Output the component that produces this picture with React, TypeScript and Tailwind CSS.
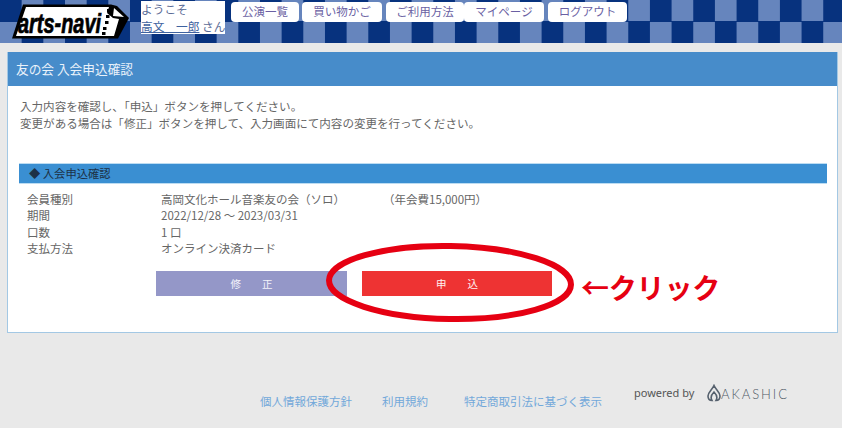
const font = { fontFamily: '"Noto Sans CJK JP", "Noto Sans", sans-serif' };

function Logo() {
  return (
    <svg width="120" height="38" viewBox="0 0 120 38" className="shrink-0 ml-[11px] mt-[3px]">
      <path d="M12 1.5 L100 1.5 L106 3 L118 15 L107 35.5 L1 35.5 Z" fill="#000" />
      <path d="M15 4 L98 4 L96 10 L102 15 L108 16 L103 33 L5 33 Z" fill="#fff" />
      <text
        x="7"
        y="29.5"
        textLength="83"
        lengthAdjust="spacingAndGlyphs"
        fontFamily="Liberation Sans"
        fontWeight="700"
        fontStyle="italic"
        fontSize="27"
        stroke="#000"
        strokeWidth="0.7"
        fill="#000"
      >
        arts-navi
      </text>
      <rect x="96" y="6" width="3.5" height="3" fill="#000" />
      <rect x="95" y="12" width="3.5" height="3" fill="#000" />
      <rect x="94" y="18" width="3.5" height="3" fill="#000" />
      <rect x="92" y="24" width="3.5" height="3" fill="#000" />
      <rect x="91" y="29" width="3.5" height="3" fill="#000" />
      <path d="M103 5 L113 14 L102 13 Z" fill="#fff" />
    </svg>
  );
}

function Akashic() {
  return (
    <svg width="84" height="18" viewBox="0 0 84 18" className="ml-[12px]">
      <path
        d="M8 1.5 C6 6 2 8 2 12 C2 15 4 16.5 6 16.5 C4.5 14 5 11 8 8 C11 11 11.5 14 10 16.5 C12.5 16.5 14 15 14 12 C14 8 10 6 8 1.5 Z"
        fill="none"
        stroke="#56616e"
        strokeWidth="1.6"
      />
      <text
        x="15"
        y="14.5"
        textLength="66"
        lengthAdjust="spacing"
        fontFamily="Lato"
        fontWeight="300"
        fontSize="13"
        fill="#4f5a66"
      >
        AKASHIC
      </text>
    </svg>
  );
}

const navItems = [
  { label: "公演一覧", w: "w-[68px]", mr: "mr-[3px]" },
  { label: "買い物かご", w: "w-[80px]", mr: "mr-[4px]" },
  { label: "ご利用方法", w: "w-[78px]", mr: "mr-0" },
  { label: "マイページ", w: "w-[80px]", mr: "mr-[4px]" },
  { label: "ログアウト", w: "w-[79px]", mr: "mr-0" },
];

const rows = [
  { k: "会員種別", v: "高岡文化ホール音楽友の会（ソロ）", x: "（年会費15,000円）" },
  { k: "期間", v: "2022/12/28 ～ 2023/03/31" },
  { k: "口数", v: "1 口" },
  { k: "支払方法", v: "オンライン決済カード" },
];

export default function App() {
  return (
    <div className="relative w-[842px] h-[428px] overflow-hidden bg-[#e9e9e9]" style={font}>
      <header className="flex h-[43px] bg-[conic-gradient(#6685bd_25%,#07327e_0_50%,#6685bd_0_75%,#07327e_0)] bg-[size:43.33px_43px]">
        <Logo />
        <div className="ml-[10px] mt-[1px] h-[33px] w-[84px] shrink-0 bg-white text-[11.7px] leading-[16.5px] text-[#5a6b96] whitespace-nowrap">
          <div>ようこそ</div>
          <div>
            <span className="text-[#3f63a0] underline">高文　一郎</span> さん
          </div>
        </div>
        <nav className="ml-[6px] mt-[2px] flex items-start">
          {navItems.map((n) => (
            <div
              key={n.label}
              className={`flex h-[20px] items-center justify-center rounded-[4px] bg-white text-[11.5px] text-[#6a5fa3] ${n.w} ${n.mr}`}
            >
              {n.label}
            </div>
          ))}
        </nav>
      </header>

      <main className="ml-[7px] mt-[9px] h-[281px] w-[831px] border border-t-0 border-[#a3c8e4] bg-white">
        <h1 className="flex h-[34px] items-center bg-[#478cca] pl-[8px] text-[12.7px] font-normal text-[#eaf2fa]">
          友の会 入会申込確認
        </h1>
        <div className="pl-[12px] pt-[12px] text-[11.55px] leading-[17px] text-[#666666]">
          <p>入力内容を確認し、「申込」ボタンを押してください。</p>
          <p>変更がある場合は「修正」ボタンを押して、入力画面にて内容の変更を行ってください。</p>
        </div>
        <section className="ml-[11px] mr-[10px] mt-[31px]">
          <div className="flex h-[21px] items-center border-y border-[#bcdcf2] bg-[#3a8fd2] pl-[10px] text-[11.3px] text-[#1d3146]">
            ◆ 入会申込確認
          </div>
          <div className="pl-[8px] pt-[7px] text-[11.5px] leading-[16.3px] text-[#666666]">
            {rows.map((r) => (
              <div key={r.k} className="flex">
                <div className="w-[134px]">{r.k}</div>
                <div className="w-[222px] whitespace-nowrap">{r.v}</div>
                {r.x && <div className="whitespace-nowrap">{r.x}</div>}
              </div>
            ))}
          </div>
          <div className="ml-[137px] mt-[15px] flex gap-[15px]">
            <button className="h-[25px] w-[191px] bg-[#9497c8] text-[10.5px] text-[#f2f2fa]">修　　正</button>
            <button className="h-[25px] w-[190px] bg-[#ee3333] text-[10.5px] text-[#fff0f0]">申　　込</button>
          </div>
        </section>
      </main>

      <footer className="mt-[51px] flex items-start pl-[260px] text-[11.5px] text-[#72a8da]">
        <a className="mt-[9px] w-[122px] leading-[17px]">個人情報保護方針</a>
        <a className="mt-[9px] w-[82px] leading-[17px]">利用規約</a>
        <a className="mt-[9px] w-[170px] leading-[17px]">特定商取引法に基づく表示</a>
        <span className="text-[11px] leading-[17px] text-[#555555] font-['Noto_Sans']">powered by</span>
        <Akashic />
      </footer>

      <svg width="256" height="100" viewBox="0 0 256 100" className="absolute left-[322px] top-[239px]">
        <ellipse
          cx="128"
          cy="43.5"
          rx="121"
          ry="36.5"
          fill="none"
          stroke="#e60012"
          strokeWidth="6"
          transform="rotate(1 128 43.5)"
        />
      </svg>
      <div className="absolute left-[581px] top-[267px] text-[28px] leading-[40px] font-bold text-[#e60012] whitespace-nowrap tracking-[-0.2px]">
        ←クリック
      </div>
    </div>
  );
}
